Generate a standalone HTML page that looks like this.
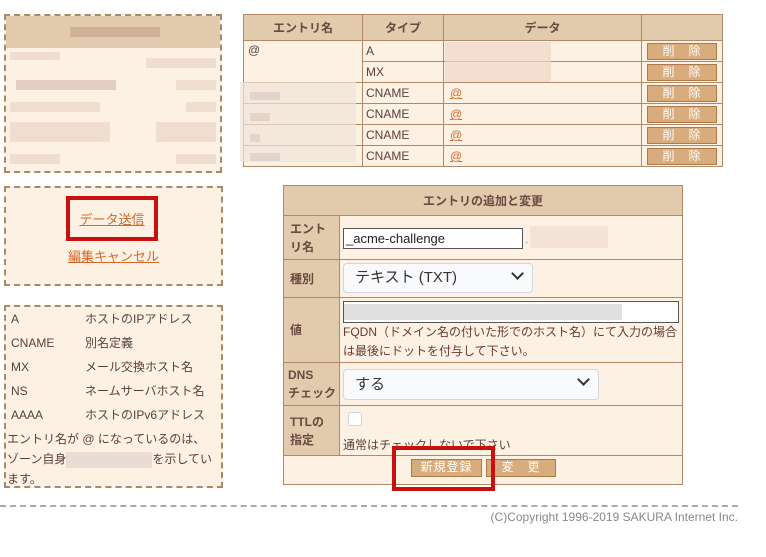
<!DOCTYPE html>
<html><head><meta charset="utf-8"><style>
body{margin:0;width:766px;height:557px;background:#fff;font-family:"Liberation Sans","Noto Sans CJK JP",sans-serif;position:relative;overflow:hidden;color:#5a3e3e;font-size:12px}
.a{position:absolute}
.dash{border:2px dashed #a8896a;background:#fdf1e4;box-sizing:border-box}
.blur{position:absolute;background:#e8d4c8;opacity:.7}
table{border-collapse:collapse;position:absolute}
td,th{border:1px solid #b08a68;padding:0;box-sizing:border-box}
th{background:#e2cbad;font-weight:bold;color:#6a4a40;font-size:12px}
td{background:#fdf1e4;color:#5a3e3e;font-size:12px}
.btn{display:block;margin:0 auto;width:70px;height:17px;background:#d8ac7c;border:1px solid #b07a48;box-sizing:border-box;color:#fff;font-size:12px;line-height:15px;text-align:center;letter-spacing:1px}
.lnk{color:#d2692a;text-decoration:underline}
.lab{background:#e2cbad;font-weight:bold;color:#6a4a40;padding-left:6px;font-size:12px;line-height:18px}
.sel{position:absolute;background:#f9fafc;border:1px solid #cfd6e4;border-radius:4px;box-sizing:border-box;font-size:15px;color:#333;padding-left:11px}
.chev{position:absolute;right:10px;top:5px;width:7px;height:7px;border-right:2px solid #333;border-bottom:2px solid #333;transform:rotate(45deg)}
</style></head><body>

<div class="a dash" style="left:4px;top:14px;width:218px;height:159px;overflow:hidden">
 <div class="a" style="left:0;top:0;width:218px;height:32px;background:#e2cbad"></div>
 <div class="blur" style="left:64px;top:11px;width:90px;height:10px;background:#c9a48e"></div>
 <div class="blur" style="left:4px;top:36px;width:50px;height:8px"></div>
 <div class="blur" style="left:140px;top:42px;width:70px;height:10px"></div>
 <div class="blur" style="left:10px;top:64px;width:100px;height:10px;background:#d9bfb5"></div>
 <div class="blur" style="left:170px;top:64px;width:40px;height:10px"></div>
 <div class="blur" style="left:4px;top:86px;width:90px;height:10px"></div>
 <div class="blur" style="left:180px;top:86px;width:30px;height:10px"></div>
 <div class="blur" style="left:4px;top:106px;width:100px;height:20px"></div>
 <div class="blur" style="left:150px;top:106px;width:60px;height:20px"></div>
 <div class="blur" style="left:4px;top:138px;width:50px;height:10px"></div>
 <div class="blur" style="left:170px;top:138px;width:40px;height:10px"></div>
</div>

<div class="a dash" style="left:4px;top:186px;width:219px;height:100px"></div>
<div class="a lnk" style="left:66px;top:209px;width:92px;text-align:center;font-size:13px">データ送信</div>
<div class="a" style="left:66px;top:196px;width:92px;height:45px;border:4px solid #c8100f;box-sizing:border-box"></div>
<div class="a lnk" style="left:4px;top:246px;width:219px;text-align:center;font-size:13px">編集キャンセル</div>

<div class="a dash" style="left:4px;top:305px;width:219px;height:183px"></div>
<div class="a" style="left:11px;top:307px;line-height:24px;font-size:12px;color:#5a3e3e">
A<br>CNAME<br>MX<br>NS<br>AAAA</div>
<div class="a" style="left:85px;top:307px;line-height:24px;font-size:12px;color:#5a3e3e">
ホストのIPアドレス<br>別名定義<br>メール交換ホスト名<br>ネームサーバホスト名<br>ホストのIPv6アドレス</div>
<div class="a" style="left:7px;top:429px;width:212px;line-height:20px;font-size:12px">エントリ名が @ になっているのは、<br>ゾーン自身<span style="display:inline-block;width:86px;height:16px;background:#eadbd4;vertical-align:middle"></span>を示してい<br>ます。</div>

<table style="left:243px;top:14px;width:480px">
<tr style="height:26px"><th style="width:119px">エントリ名</th><th style="width:81px">タイプ</th><th style="width:198px">データ</th><th></th></tr>
<tr style="height:21px"><td rowspan="2" style="vertical-align:top;padding:2px 4px">@</td><td style="padding-left:3px">A</td><td></td><td><span class="btn">削　除</span></td></tr>
<tr style="height:21px"><td style="padding-left:3px">MX</td><td></td><td><span class="btn">削　除</span></td></tr>
<tr style="height:21px"><td></td><td style="padding-left:3px">CNAME</td><td style="padding-left:6px"><span class="lnk">@</span></td><td><span class="btn">削　除</span></td></tr>
<tr style="height:21px"><td></td><td style="padding-left:3px">CNAME</td><td style="padding-left:6px"><span class="lnk">@</span></td><td><span class="btn">削　除</span></td></tr>
<tr style="height:21px"><td></td><td style="padding-left:3px">CNAME</td><td style="padding-left:6px"><span class="lnk">@</span></td><td><span class="btn">削　除</span></td></tr>
<tr style="height:21px"><td></td><td style="padding-left:3px">CNAME</td><td style="padding-left:6px"><span class="lnk">@</span></td><td><span class="btn">削　除</span></td></tr>
</table>
<div class="blur" style="left:445px;top:42px;width:106px;height:40px;background:#f0d6c6"></div>
<div class="blur" style="left:240px;top:82px;width:116px;height:80px;background:#f0e2d8"></div>
<div class="blur" style="left:250px;top:92px;width:30px;height:8px;background:#dccac2"></div>
<div class="blur" style="left:250px;top:113px;width:20px;height:8px;background:#dccac2"></div>
<div class="blur" style="left:250px;top:134px;width:10px;height:8px;background:#dccac2"></div>
<div class="blur" style="left:250px;top:153px;width:30px;height:8px;background:#dccac2"></div>

<table style="left:283px;top:185px;width:400px">
<tr style="height:30px"><th colspan="2">エントリの追加と変更</th></tr>
<tr style="height:44px"><td class="lab" style="width:56px">エント<br>リ名</td><td></td></tr>
<tr style="height:38px"><td class="lab">種別</td><td></td></tr>
<tr style="height:65px"><td class="lab">値</td><td></td></tr>
<tr style="height:43px"><td class="lab" style="padding-left:4px">DNS<br>チェック</td><td></td></tr>
<tr style="height:50px"><td class="lab">TTLの<br>指定</td><td></td></tr>
<tr style="height:29px"><td colspan="2"></td></tr>
</table>
<div class="a" style="left:343px;top:228px;width:180px;height:21px;background:#fff;border:1px solid #555;box-sizing:border-box;font-size:13px;color:#222;padding-left:2px;line-height:19px">_acme-challenge</div>
<div class="a" style="left:525px;top:232px;color:#888">.</div>
<div class="blur" style="left:530px;top:226px;width:78px;height:22px;background:#eedcd0"></div>
<div class="sel" style="left:343px;top:263px;width:190px;height:30px;line-height:28px">テキスト (TXT)<span class="chev"></span></div>
<div class="a" style="left:343px;top:301px;width:336px;height:22px;background:#fff;border:1px solid #555;box-sizing:border-box"><div style="margin:2px 0 0 0;width:278px;height:16px;background:#e0e0e0"></div></div>
<div class="a" style="left:343px;top:323px;width:340px;line-height:19px;font-size:12px;color:#6a3a30">FQDN（ドメイン名の付いた形でのホスト名）にて入力の場合は最後にドットを付与して下さい。</div>
<div class="sel" style="left:343px;top:369px;width:256px;height:31px;line-height:29px">する<span class="chev"></span></div>
<div class="a" style="left:348px;top:412px;width:14px;height:14px;background:#fff;border:1px solid #cfd6e4;border-radius:3px;box-sizing:border-box"></div>
<div class="a" style="left:343px;top:436px;font-size:12px;color:#5a3e3e">通常はチェックしないで下さい</div>
<div class="a btn" style="left:411px;top:459px;width:71px;height:18px">新規登録</div>
<div class="a btn" style="left:486px;top:459px;width:70px;height:18px">変　更</div>
<div class="a" style="left:392px;top:446px;width:103px;height:45px;border:4px solid #c8100f;box-sizing:border-box"></div>

<div class="a" style="left:0;top:505px;width:738px;border-top:2px dashed #aaa"></div>
<div class="a" style="right:28px;top:510px;font-size:12px;color:#888">(C)Copyright 1996-2019 SAKURA Internet Inc.</div>
</body></html>
